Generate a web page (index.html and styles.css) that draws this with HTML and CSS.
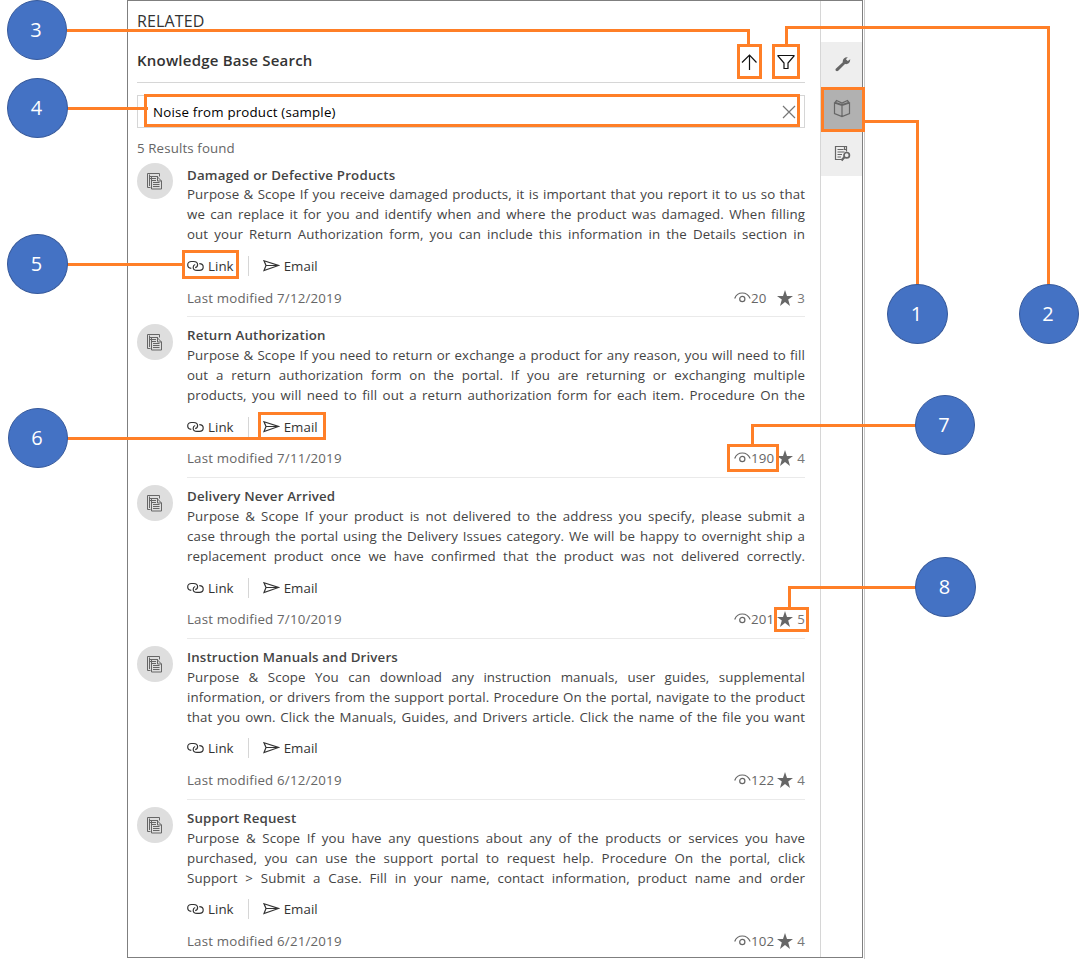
FILE: index.html
```html
<!DOCTYPE html>
<html lang="en">
<head>
<meta charset="utf-8">
<title>Knowledge Base Search</title>
<link rel="stylesheet" href="styles.css">
</head>
<body>
<svg class="defs" width="0" height="0">
  <symbol id="doc" viewBox="0 0 16 17"><path d="M3.500 14.500H.5V.5H12.500V3.500M2.500 3.500H11M2.500 5.500H9M2.500 1.500V13" /><path d="M4.500 4V16H14.500V8L10.500 4M10.500 4V8H14.500M6 9.500H12.500M6 11.500H12.500M6 13.500H12.500M4.500 7.500H9" /></symbol>
  <symbol id="link" viewBox="0 0 17 12"><path d="M4.300 8.300C2.200 8 .7 6.700 .7 4.900S2.300 1.500 4.400 1.500H6.600C9 1.500 10.600 2.900 10.600 4.700C10.600 6.100 9.700 7.300 8.200 7.700M12.300 3.700C14.500 3.800 16.200 5.100 16.200 7S14.600 10.400 12.400 10.400H10C7.700 10.400 6.200 9 6.200 7.200C6.200 5.900 7 4.900 8.200 4.500" /></symbol>
  <symbol id="send" viewBox="0 0 17 12"><path d="M1 .8L15.500 5.500L1 10.500L3 5.500ZM3 5.500H15" /></symbol>
  <symbol id="eye" viewBox="0 0 17 12"><path d="M.7 6.500C2 3 4.800 1 8.300 1S14.600 3 16.200 6.500" /><circle cx="8.300" cy="7" r="2.600" /></symbol>
  <symbol id="star" viewBox="0 0 16 16"><path d="M8 0L10 5.900H16L11.200 9.500L13 16L8 12L3 16L4.800 9.500L0 5.900H6Z" /></symbol>
</svg>
<main class="panel">
  <section class="content">
    <h1 class="related">RELATED</h1>
    <header class="heading">
      <h2 class="kb">Knowledge Base Search</h2>
      <div class="tools">
        <svg class="line dark" width="16" height="17" viewBox="0 0 16 17"><path d="M8.500 16V1M1 8.500L8.500 1L15.500 8.500" /></svg>
        <svg class="line dark" width="18" height="16" viewBox="0 0 18 16"><path d="M1 1.500H17V2L11 9V14.500H7V9L1 2Z" /></svg>
      </div>
    </header>
    <div class="search"><span class="query">Noise from product (sample)</span>
      <svg class="line gray" width="14" height="14" viewBox="0 0 14 14"><path d="M1 1L13 13M13 1L1 13" /></svg>
    </div>
    <p class="count">5 Results found</p>
    <div class="results" id="results"></div>
  </section>
  <nav class="rail">
    <div class="tab"><svg width="16" height="16" viewBox="0 0 16 16"><path class="solid" d="M.8 12.800L7.800 6.200C7.300 3.200 9.600 .8 12.800 1.200L10.900 3.200L12.800 5.100L15.200 3.300C15.500 6.500 12.800 8.800 10 8L3.200 14.800C1.500 16-.3 14.300.8 12.800Z" /></svg></div>
    <div class="tab active"><svg class="line" width="18" height="19" viewBox="0 0 18 19"><path d="M9 6.500L1.500 4V14.500L9 17.500L16.500 14.500V4L9 6.500V17.500M1.500 4L3.500 1.500L9 4L14.500 1.500L16.500 4M3.500 1.500L2.500 3.500L9 5.500L15.500 3.500L14.500 1.500" /></svg></div>
    <div class="tab"><svg class="line" width="17" height="17" viewBox="0 0 17 17"><path d="M7.500 14.500H1.500V1.500H12.500V6.500M10.500 1.500V4.500H13M3.500 4.500H9.500M3.500 7H10.500M3.500 9.500H8M3.500 12H7" /><circle class="ring" cx="12.700" cy="10.200" r="2.700" /><path class="thick" d="M10.500 12L7.500 15.500" /></svg></div>
  </nav>
</main>
<div class="edge"></div>
<div class="callouts">
  <svg width="1083" height="959" viewBox="0 0 1083 959">
    <path d="M67 30.500H748.500V44M1048.500 285V27.500H786.500V44M865 121.500H917.500V285M67 108.500H148M67 264.500H183M67 438.500H259M916 425.500H752.500V445M916 587.500H789.500V608" />
    <path d="M738.500 45.500H760.500V77.500H738.500ZM773.500 45.500H798.500V77.500H773.500ZM822.500 88.500H863.500V130.500H822.500ZM145.500 95.500H798.500V125.500H145.500ZM183.500 251.500H237.500V277.500H183.500ZM259.500 413.500H324.500V438.500H259.500ZM728.500 445.500H777.500V470.500H728.500ZM775.500 608.500H807.500V630.500H775.500Z" />
  </svg>
  <span class="badge b1">1</span><span class="badge b2">2</span><span class="badge b3">3</span><span class="badge b4">4</span>
  <span class="badge b5">5</span><span class="badge b6">6</span><span class="badge b7">7</span><span class="badge b8">8</span>
</div>
<script src="app.js"></script>
</body>
</html>
```
FILE: styles.css
```css
* { box-sizing: border-box; }
body { margin: 0; width: 1083px; height: 959px; overflow: hidden; background: #fff; position: relative; display: flex; padding-left: 127px; font: 13.300px/20px "Open Sans", "Noto Sans", sans-serif; color: #444; }
h1, h2, h3, p { margin: 0; font-weight: 400; }
.defs { position: absolute; }
.panel { width: 736px; height: 958px; border: 1px solid #7f7f7f; display: flex; }
.content { width: 692px; padding-left: 9px; flex: none; }
.edge { width: 2px; height: 959px; border-right: 1px solid #c8c8c8; }
.related { font-size: 16px; line-height: 22px; padding-top: 9px; height: 41px; color: #333; letter-spacing: .15px; }
.heading { width: 668px; height: 41px; border-bottom: 1px solid #d6d6d6; display: flex; justify-content: space-between; }
.kb { font-size: 15px; font-weight: 600; line-height: 20px; padding-top: 8px; color: #333; white-space: nowrap; letter-spacing: .22px; }
.tools { display: flex; gap: 20px; padding: 12px 10px 0 0; }
.search { width: 668px; height: 33px; margin-top: 12px; border: 1px solid #d6d6d6; display: flex; align-items: center; justify-content: space-between; padding: 0 8px 0 15px; color: #000; }
.query { letter-spacing: .19px; }
.count { color: #666; margin-top: 10px; height: 18px; letter-spacing: .12px; }
.results { width: 668px; }
.item { height: 161px; display: flex; }
.avatar { width: 36px; height: 36px; border-radius: 50%; background: #dedede; margin: 7px 14px 0 0; display: grid; place-items: center; flex: none; }
.body { width: 618px; padding-top: 8px; border-bottom: 1px solid #eaeaea; }
.item:last-child .body { border: 0; }
.title { font-size: 13.300px; font-weight: 600; height: 20px; color: #444; letter-spacing: .15px; }
.item:first-child .title { padding-top: 1px; letter-spacing: .2px; }
.text p { text-align: justify; text-align-last: justify; white-space: nowrap; letter-spacing: .1px; }
.text { height: 60px; }
.actions { height: 20px; margin-top: 12px; display: flex; align-items: center; color: #333; letter-spacing: .05px; }
.action { display: flex; align-items: center; gap: 4px; }
.divider { width: 1px; height: 20px; background: #d6d6d6; margin: 0 14px; }
.meta { margin-top: 11px; display: flex; justify-content: space-between; color: #666; letter-spacing: .18px; }
.item:first-child .meta { margin-top: 12px; }
.item:nth-child(n+4) .actions { margin-top: 11px; }
.item:nth-child(n+4) .meta { margin-top: 12px; }
.stats { display: grid; grid-template-columns: 17px 26px 16px 12px; align-items: center; }
.rating { text-align: right; color: #777; }
.rail { width: 42px; height: 956px; border-left: 1px solid #d6d6d6; padding-top: 41px; flex: none; }
.tab { height: 45px; width: 41px; background: #eee; display: grid; place-items: center; padding: 0 0 2px 2px; }
.tab.active { background: #b1b1b1; padding: 0 0 2px; }
.tab:last-child { height: 44px; }
.line, .avatar svg, .actions svg, .eye { fill: none; stroke: #666; stroke-width: 1.200; }
.avatar svg { stroke-width: 1; }
.dark { stroke: #111; }
.gray { stroke: #777; }
.actions svg { stroke: #333; }
.solid, .star { fill: #666; }
.ring { stroke-width: 1.700; }
.thick { stroke-width: 2.200; }
.callouts { position: absolute; inset: 0; }
.callouts svg { display: block; fill: none; stroke: #ff7f27; stroke-width: 3; }
.badge { position: absolute; width: 60px; height: 60px; border-radius: 50%; background: #4472c4; border: 1px solid #36599b; color: #fff; font: 20px/57px "Open Sans", sans-serif; text-align: center; padding-right: 2px; }
.b1 { left: 887px; top: 284px; width: 61px; }
.b2 { left: 1019px; top: 284px; }
.b3 { left: 7px; top: 0; }
.b4 { left: 7px; top: 78px; width: 61px; }
.b5 { left: 7px; top: 234px; width: 61px; }
.b6 { left: 8px; top: 408px; }
.b7 { left: 915px; top: 395px; }
.b8 { left: 915px; top: 557px; width: 61px; }
```
FILE: app.js
```js
const articles = [
  ["Damaged or Defective Products", ["Purpose & Scope If you receive damaged products, it is important that you report it to us so that", "we can replace it for you and identify when and where the product was damaged. When filling", "out your Return Authorization form, you can include this information in the Details section in"], "7/12/2019", 20, 3],
  ["Return Authorization", ["Purpose & Scope If you need to return or exchange a product for any reason, you will need to fill", "out a return authorization form on the portal. If you are returning or exchanging multiple", "products, you will need to fill out a return authorization form for each item. Procedure On the"], "7/11/2019", 190, 4],
  ["Delivery Never Arrived", ["Purpose & Scope If your product is not delivered to the address you specify, please submit a", "case through the portal using the Delivery Issues category. We will be happy to overnight ship a", "replacement product once we have confirmed that the product was not delivered correctly."], "7/10/2019", 201, 5],
  ["Instruction Manuals and Drivers", ["Purpose & Scope You can download any instruction manuals, user guides, supplemental", "information, or drivers from the support portal. Procedure On the portal, navigate to the product", "that you own. Click the Manuals, Guides, and Drivers article. Click the name of the file you want"], "6/12/2019", 122, 4],
  ["Support Request", ["Purpose & Scope If you have any questions about any of the products or services you have", "purchased, you can use the support portal to request help. Procedure On the portal, click", "Support > Submit a Case. Fill in your name, contact information, product name and order"], "6/21/2019", 102, 4]
];
const esc = s => s.replace(/&/g, "&amp;").replace(/>/g, "&gt;");
document.getElementById("results").innerHTML = articles.map(([title, lines, date, views, rating]) => `
<article class="item">
  <div class="avatar"><svg width="16" height="17"><use href="#doc"/></svg></div>
  <div class="body">
    <h3 class="title">${title}</h3>
    <div class="text">${lines.map(l => `<p>${esc(l)}</p>`).join("")}</div>
    <div class="actions">
      <span class="action"><svg width="17" height="12"><use href="#link"/></svg>Link</span>
      <span class="divider"></span>
      <span class="action"><svg width="17" height="12"><use href="#send"/></svg>Email</span>
    </div>
    <div class="meta"><span>Last modified ${date}</span>
      <div class="stats"><svg class="eye" width="17" height="12"><use href="#eye"/></svg><span>${views}</span><svg class="star" width="16" height="16"><use href="#star"/></svg><span class="rating">${rating}</span></div>
    </div>
  </div>
</article>`).join("");
```
